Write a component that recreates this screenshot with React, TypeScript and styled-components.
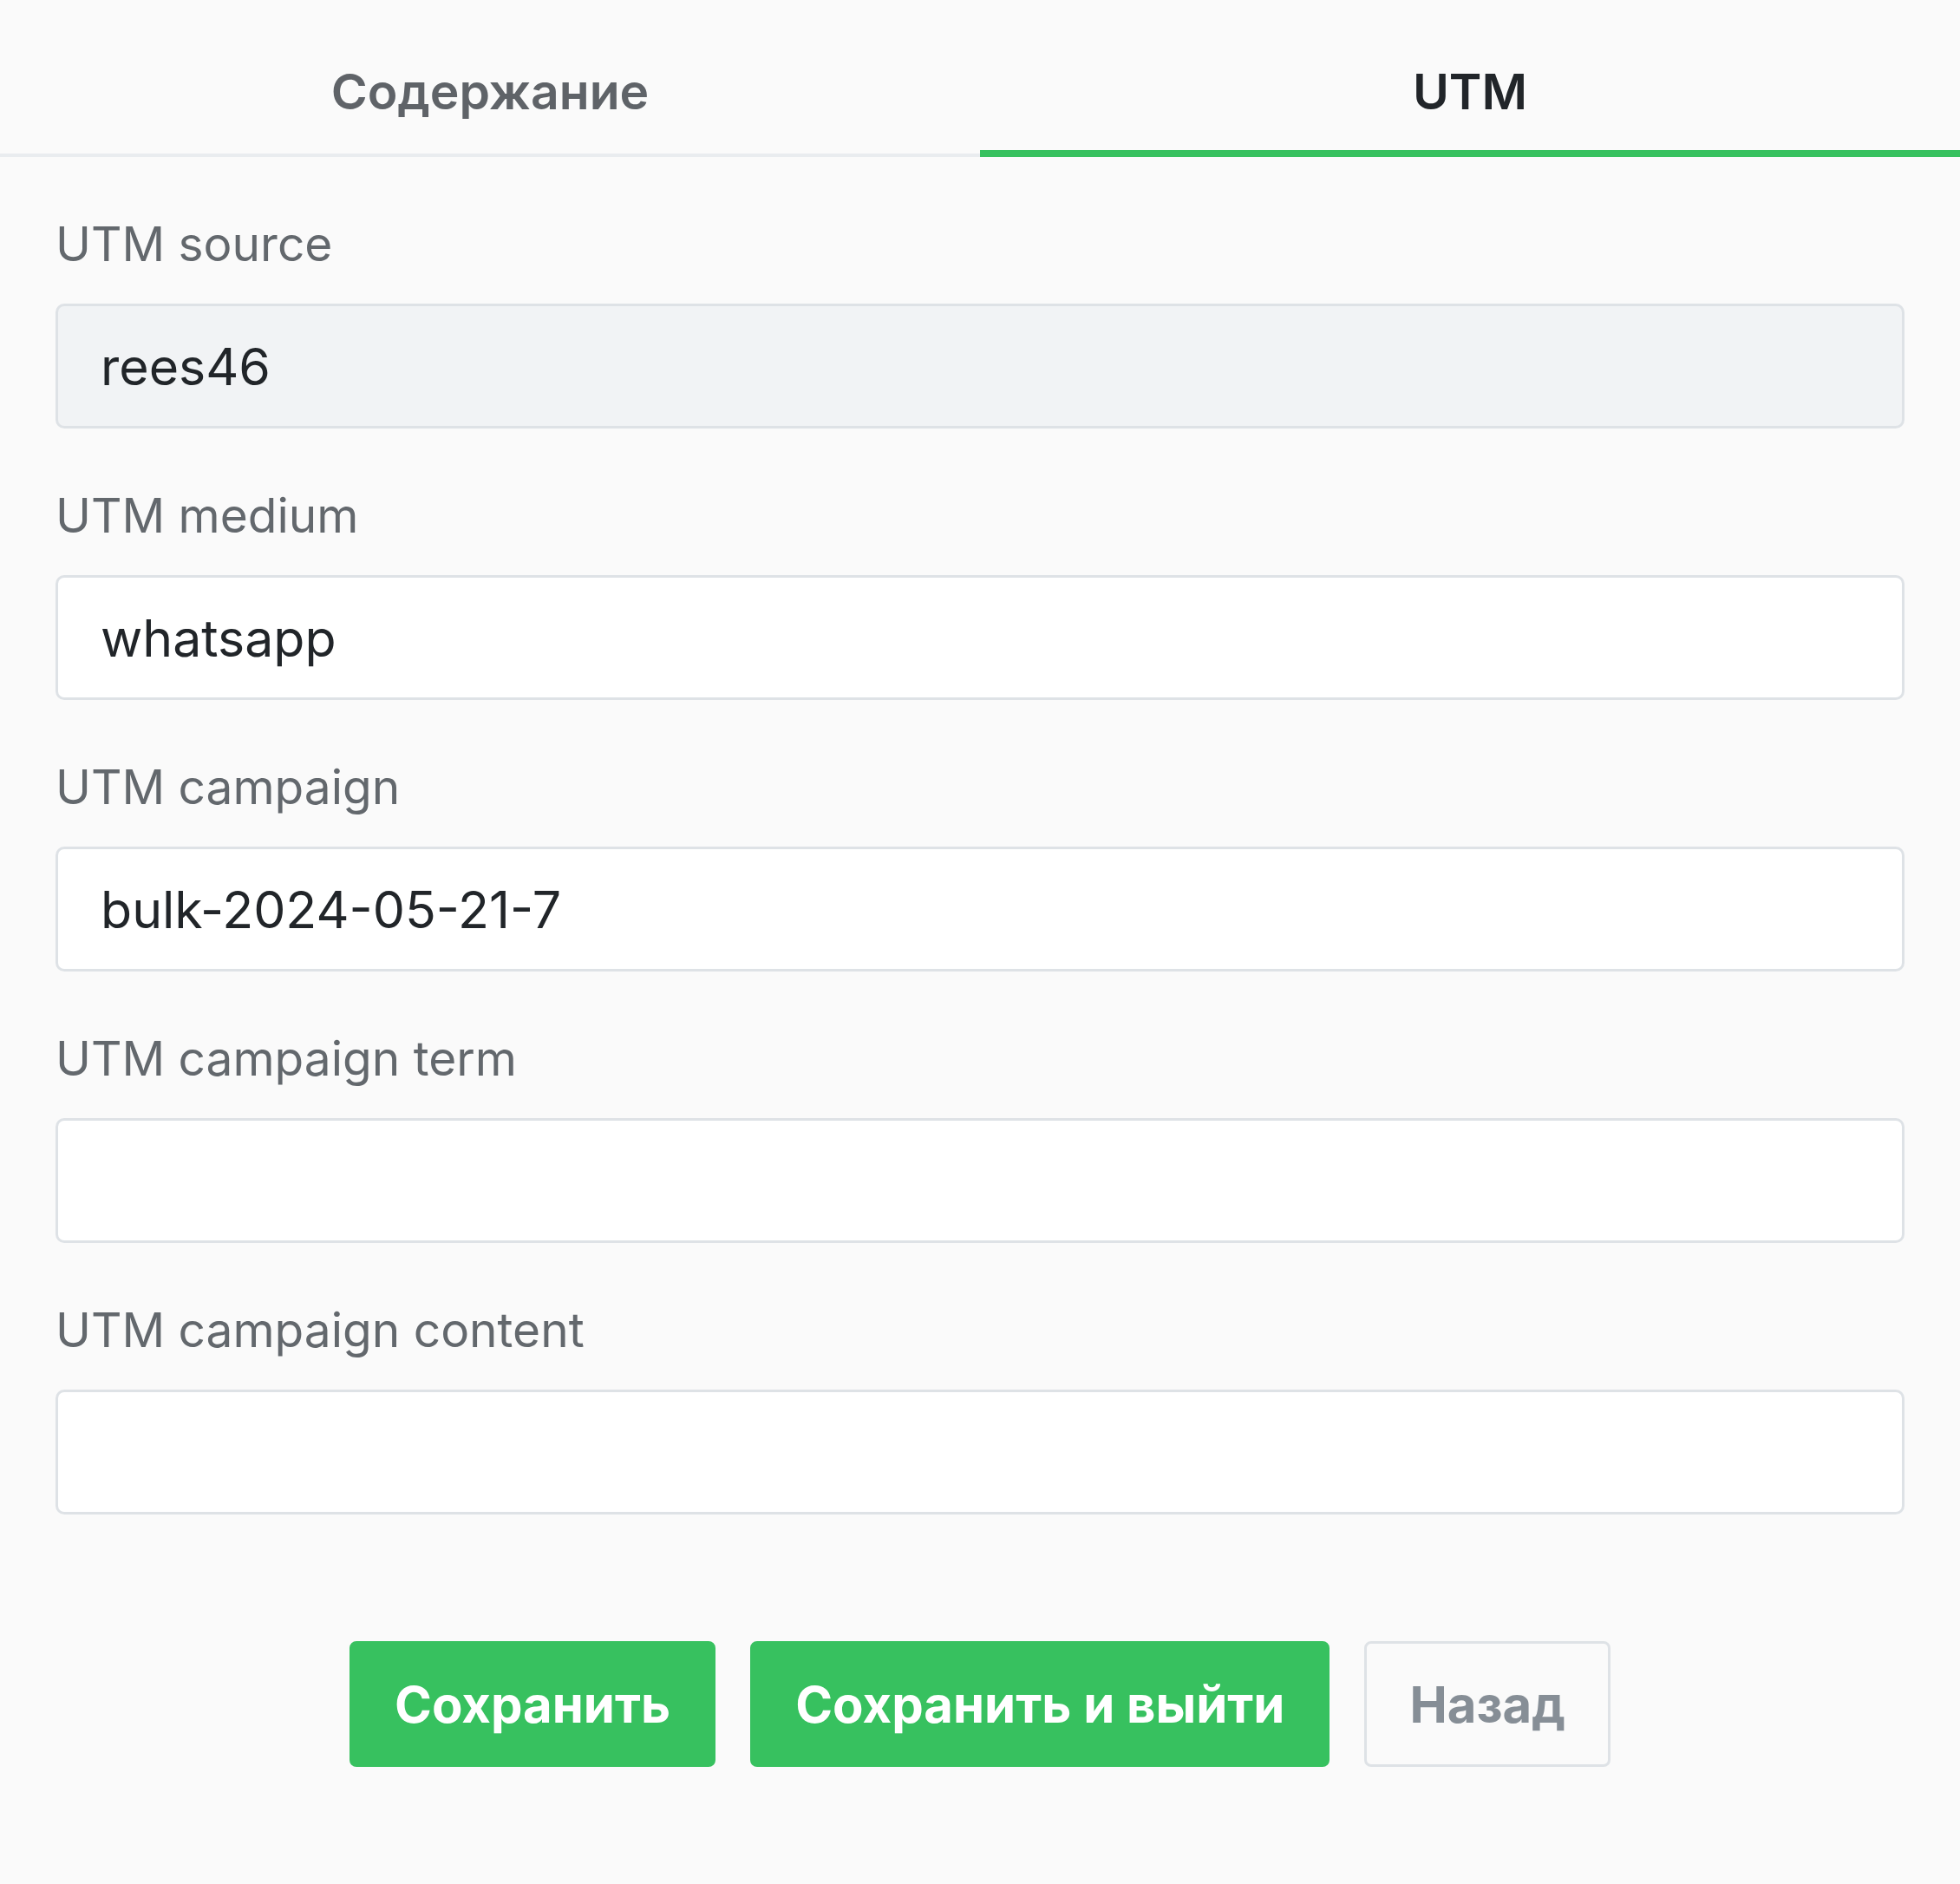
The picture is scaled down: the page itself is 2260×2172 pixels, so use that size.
import React from "react";
import styled, { createGlobalStyle } from "styled-components";

const Global = createGlobalStyle`
  html, body { margin: 0; padding: 0; background: #fafafa; }
  body { font-family: Inter, "Noto Sans", "Liberation Sans", sans-serif; }
  * { box-sizing: border-box; }
`;

const Page = styled.div`
  min-height: 2172px;
  background: #fafafa;
`;

const TabBar = styled.div`
  display: flex;
  border-bottom: 4px solid #e9ecef;
`;

const Tab = styled.div<{ $active?: boolean }>`
  flex: 1;
  height: 181px;
  margin-bottom: -4px;
  padding-top: 72px;
  text-align: center;
  font-size: 57px;
  line-height: 67px;
  font-weight: 600;
  color: ${(p) => (p.$active ? "#212529" : "#5f6368")};
  border-bottom: 8px solid ${(p) => (p.$active ? "#37c15f" : "transparent")};
`;

const Form = styled.div`
  padding: 58px 64px 0;
  display: flex;
  flex-direction: column;
`;

const Field = styled.div`
  display: flex;
  flex-direction: column;
  margin-bottom: 58px;
`;

const Label = styled.label`
  font-size: 55px;
  line-height: 84px;
  color: #63686d;
  margin-bottom: 27px;
`;

const Input = styled.input<{ $disabled?: boolean }>`
  height: 144px;
  width: 100%;
  border: 3px solid #dee2e6;
  border-radius: 10px;
  background: ${(p) => (p.$disabled ? "#f1f3f5" : "#ffffff")};
  padding: 0 49px;
  font-family: inherit;
  font-size: 59px;
  color: #212529;
  outline: none;
`;

const Actions = styled.div`
  display: flex;
  justify-content: center;
  gap: 40px;
  margin-top: 88px;
`;

const Button = styled.button<{ $variant: "primary" | "ghost" }>`
  height: 145px;
  padding: 0 49px;
  border-radius: 8px;
  font-family: inherit;
  font-size: 58px;
  font-weight: 700;
  cursor: pointer;
  border: 3px solid ${(p) => (p.$variant === "primary" ? "#37c15f" : "#dee2e6")};
  background: ${(p) => (p.$variant === "primary" ? "#37c15f" : "transparent")};
  color: ${(p) => (p.$variant === "primary" ? "#ffffff" : "#868e96")};
`;

const fields = [
  { label: "UTM source", value: "rees46", disabled: true },
  { label: "UTM medium", value: "whatsapp" },
  { label: "UTM campaign", value: "bulk-2024-05-21-7" },
  { label: "UTM campaign term", value: "" },
  { label: "UTM campaign content", value: "" },
];

export default function App() {
  return (
    <Page>
      <Global />
      <TabBar>
        <Tab>Содержание</Tab>
        <Tab $active>UTM</Tab>
      </TabBar>
      <Form>
        {fields.map((f) => (
          <Field key={f.label}>
            <Label>{f.label}</Label>
            <Input $disabled={f.disabled} readOnly={f.disabled} defaultValue={f.value} />
          </Field>
        ))}
        <Actions>
          <Button $variant="primary">Сохранить</Button>
          <Button $variant="primary">Сохранить и выйти</Button>
          <Button $variant="ghost">Назад</Button>
        </Actions>
      </Form>
    </Page>
  );
}
